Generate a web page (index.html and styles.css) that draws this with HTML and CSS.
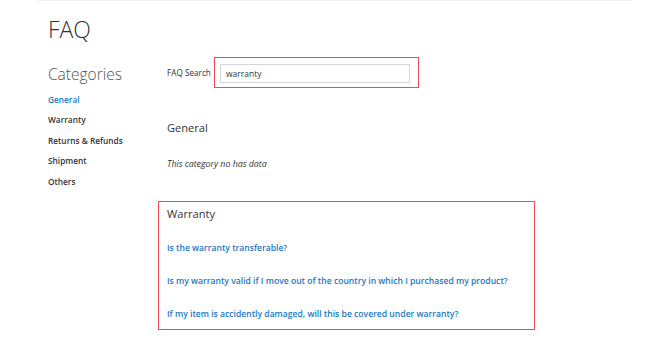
FILE: index.html
```html
<!DOCTYPE html>
<html lang="en">
<head>
  <meta charset="UTF-8">
  <meta name="viewport" content="width=device-width, initial-scale=1.0">
  <title>FAQ</title>
  <link rel="stylesheet" href="styles.css">
</head>
<body>
  <div class="page">
    <h1 class="page-title">FAQ</h1>

    <div class="faq-layout">
      <!-- Sidebar: category list -->
      <aside class="faq-sidebar">
        <h2 class="sidebar-title">Categories</h2>
        <ul class="category-list">
          <li><a href="#" class="active">General</a></li>
          <li><a href="#">Warranty</a></li>
          <li><a href="#">Returns &amp; Refunds</a></li>
          <li><a href="#">Shipment</a></li>
          <li><a href="#">Others</a></li>
        </ul>
      </aside>

      <!-- Main: search + categories -->
      <main class="faq-main">
        <form class="faq-search">
          <label for="faq-search-input">FAQ Search</label>
          <div class="search-field highlight">
            <input type="text" id="faq-search-input" value="warranty">
          </div>
        </form>

        <section class="faq-block general">
          <h3>General</h3>
          <p class="empty">This category no has data</p>
        </section>

        <section class="faq-block highlight">
          <h3>Warranty</h3>
          <ul class="question-list">
            <li><a href="#">Is the warranty transferable?</a></li>
            <li><a href="#">Is my warranty valid if I move out of the country in which I purchased my product?</a></li>
            <li><a href="#">If my item is accidently damaged, will this be covered under warranty?</a></li>
          </ul>
        </section>
      </main>
    </div>
  </div>
</body>
</html>
```

FILE: styles.css
```css
body {
  font-family: 'Open Sans', 'Noto Sans', sans-serif;
  background: #fff;
  color: #333;
  margin: 0;
}

.page {
  margin: 0 38px;
  padding: 0 10px;
  border-top: 1px solid #f0f0f0;
}

.page-title {
  font-size: 23px;
  font-weight: 300;
  margin: 9.5px 0 0;
  line-height: 36px;
}

.faq-layout {
  display: flex;
  margin-top: 15.5px;
}

.faq-sidebar {
  width: 110px;
  flex-shrink: 0;
}

.sidebar-title {
  font-size: 15.5px;
  font-weight: 300;
  margin: 0 0 3.5px;
  line-height: 24px;
  color: #555;
}

.category-list {
  list-style: none;
  margin: 0;
  padding: 0;
  font-size: 8.3px;
}

.category-list li {
  line-height: 20.5px;
}

.category-list a {
  font-weight: 600;
  color: #333;
  text-decoration: none;
}

.category-list a.active {
  color: #1979c3;
}

.faq-main {
  flex: 1;
  max-width: 377px;
}

.faq-search {
  display: flex;
  align-items: center;
  padding-left: 9px;
  margin-top: -5px;
}

.faq-search label {
  width: 47px;
  flex-shrink: 0;
  font-size: 8.2px;
  color: #333;
}

.search-field {
  padding: 6px 8px 4px 5px;
  width: 190px;
}

.search-field input {
  display: block;
  width: 100%;
  box-sizing: border-box;
  height: 19px;
  border: 1px solid #d6d6d6;
  padding: 0 5px;
  font-family: inherit;
  font-size: 8.5px;
  color: #333;
  outline: none;
}

.highlight {
  border: 1px solid #ee4a56;
}

.faq-block {
  padding: 1px 8px 8px;
  border: 1px solid transparent;
}

.faq-block.highlight {
  border-color: #ee4a56;
}

.faq-block h3 {
  font-size: 11.1px;
  font-weight: 400;
  margin: 0;
  line-height: 22px;
}

.faq-block.general {
  margin-top: 27px;
  margin-bottom: 23px;
  padding-bottom: 6px;
}

.empty {
  font-size: 8.8px;
  font-style: italic;
  margin: 18px 0 0;
  line-height: 14px;
}

.question-list {
  list-style: none;
  margin: 16px 0 0;
  padding: 0;
  font-size: 8.6px;
}

.question-list li {
  line-height: 14px;
  margin-bottom: 19px;
}

.question-list li:last-child {
  margin-bottom: 0;
}

.question-list a {
  font-weight: 600;
  color: #1979c3;
  text-decoration: none;
}
```
